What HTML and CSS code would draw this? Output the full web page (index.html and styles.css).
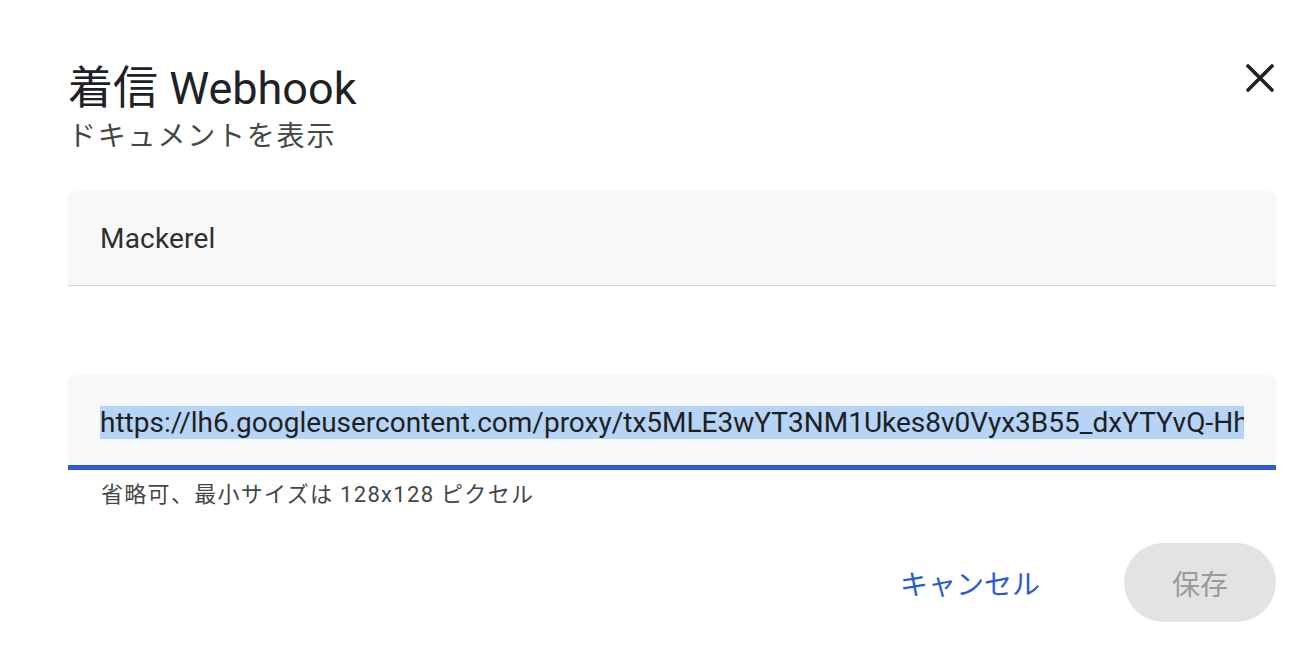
FILE: index.html
```html
<!DOCTYPE html>
<html lang="ja">
<head>
<meta charset="utf-8">
<title>着信 Webhook</title>
<link rel="stylesheet" href="styles.css">
</head>
<body>
<div class="dialog">
  <header class="head">
    <div class="titles">
      <h1 class="title">着信 Webhook</h1>
      <div class="subtitle">ドキュメントを表示</div>
    </div>
    <button class="close" aria-label="閉じる">
      <svg width="30" height="30" viewBox="0 0 30 30"><path d="M3 3 L27 27 M27 3 L3 27" stroke="#202124" stroke-width="3.6" stroke-linecap="round" fill="none"/></svg>
    </button>
  </header>

  <div class="field field-name">
    <span class="value">Mackerel</span>
  </div>

  <div class="field field-url">
    <span class="value"><span class="sel">https://lh6.googleusercontent.com/proxy/tx5MLE3wYT3NM1Ukes8v0Vyx3B55_dxYTYvQ-Hh8kQ2rT</span></span>
  </div>
  <div class="helper">省略可、最小サイズは 128x128 ピクセル</div>

  <div class="actions">
    <button class="btn-text">キャンセル</button>
    <button class="btn-save">保存</button>
  </div>
</div>
</body>
</html>
```

FILE: styles.css
```css
html, body {
  margin: 0;
  padding: 0;
  background: #ffffff;
}
body {
  font-family: Roboto, "Noto Sans CJK JP", sans-serif;
  color: #202124;
}
.dialog {
  padding: 58px 30px 0 68px;
  display: flex;
  flex-direction: column;
}
.head {
  display: flex;
  justify-content: space-between;
  align-items: flex-start;
}
.title {
  margin: 0;
  font-size: 45px;
  font-weight: 400;
  line-height: 62px;
  color: #202124;
}
.subtitle {
  font-size: 28px;
  letter-spacing: 1.8px;
  line-height: 32px;
  color: #444746;
  margin-top: 1px;
}
.close {
  border: 0;
  background: none;
  padding: 0;
  margin-top: 5px;
  margin-right: 1px;
  width: 30px;
  height: 30px;
  display: flex;
}
.field {
  height: 95px;
  box-sizing: border-box;
  border-radius: 8px 8px 0 0;
  padding: 0 32px;
  display: flex;
  align-items: center;
  overflow: hidden;
}
.field-name {
  margin-top: 38px;
  background: #f8f8f8;
  border-bottom: 1px solid #d3d3d3;
}
.field-name .value {
  font-size: 28px;
  letter-spacing: 0.2px;
  color: #2f2f2f;
  padding-top: 1px;
}
.field-url {
  margin-top: 89px;
  background: #f7f8fa;
  border-bottom: 5px solid #2a5bd0;
  padding-top: 5px;
}
.field-url .value {
  font-size: 28px;
  color: #1f1f1f;
  white-space: nowrap;
  overflow: hidden;
  display: block;
  width: 100%;
}
.sel {
  background: #b5d4f6;
}
.helper {
  padding-left: 33px;
  margin-top: 10px;
  font-size: 22px;
  letter-spacing: 1.3px;
  line-height: 30px;
  color: #444746;
}
.actions {
  margin-top: 33px;
  display: flex;
  justify-content: flex-end;
  align-items: center;
  gap: 84px;
}
.btn-text {
  border: 0;
  background: none;
  padding: 0;
  font-family: inherit;
  font-size: 28px;
  color: #2a5bd0;
}
.btn-save {
  border: 0;
  width: 152px;
  height: 79px;
  border-radius: 40px;
  background: #e3e3e3;
  color: #9b9b9b;
  font-family: inherit;
  font-size: 28px;
}
```
